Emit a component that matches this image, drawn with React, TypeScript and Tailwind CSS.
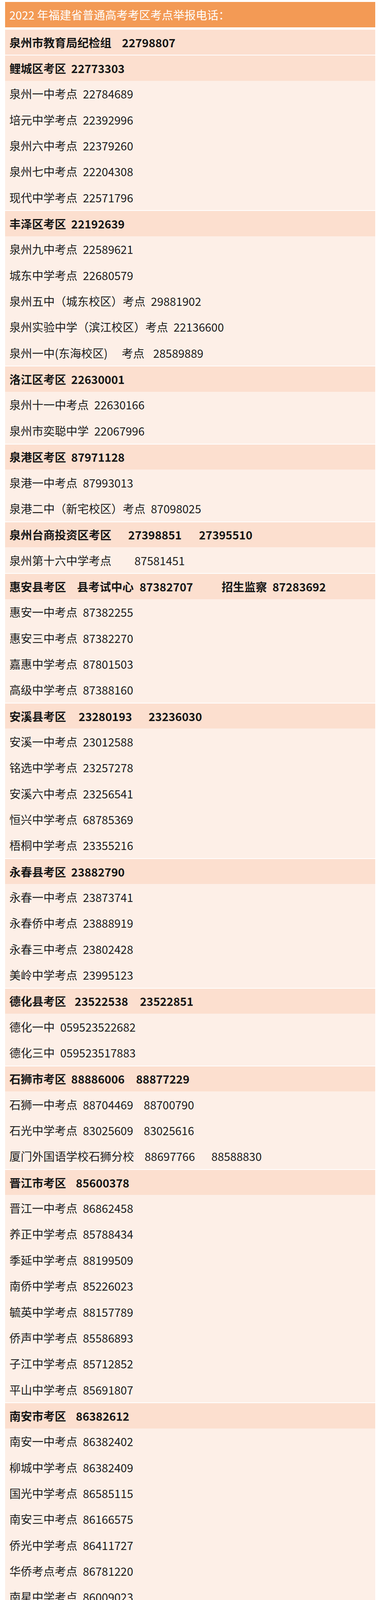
// 2022 福建省普通高考 泉州考区考点举报电话表

type Part = { t: string; gap?: string };
type Row = { head?: boolean; parts: Part[] };

// gap classes are written out in full so Tailwind picks them up
const G = 'ml-[14px]';

const rows: Row[] = [
  { head: true, parts: [{ t: '泉州市教育局纪检组' }, { t: '22798807', gap: 'ml-[27px]' }] },
  { head: true, parts: [{ t: '鲤城区考区' }, { t: '22773303', gap: 'ml-[13px]' }] },
  { parts: [{ t: '泉州一中考点' }, { t: '22784689', gap: G }] },
  { parts: [{ t: '培元中学考点' }, { t: '22392996', gap: G }] },
  { parts: [{ t: '泉州六中考点' }, { t: '22379260', gap: G }] },
  { parts: [{ t: '泉州七中考点' }, { t: '22204308', gap: G }] },
  { parts: [{ t: '现代中学考点' }, { t: '22571796', gap: G }] },
  { head: true, parts: [{ t: '丰泽区考区' }, { t: '22192639', gap: 'ml-[13px]' }] },
  { parts: [{ t: '泉州九中考点' }, { t: '22589621', gap: G }] },
  { parts: [{ t: '城东中学考点' }, { t: '22680579', gap: G }] },
  { parts: [{ t: '泉州五中（城东校区）考点' }, { t: '29881902', gap: G }] },
  { parts: [{ t: '泉州实验中学（滨江校区）考点' }, { t: '22136600', gap: G }] },
  { parts: [{ t: '泉州一中(东海校区)' }, { t: '考点', gap: 'ml-[36px]' }, { t: '28589889', gap: 'ml-[22px]' }] },
  { head: true, parts: [{ t: '洛江区考区' }, { t: '22630001', gap: 'ml-[13px]' }] },
  { parts: [{ t: '泉州十一中考点' }, { t: '22630166', gap: G }] },
  { parts: [{ t: '泉州市奕聪中学' }, { t: '22067996', gap: G }] },
  { head: true, parts: [{ t: '泉港区考区' }, { t: '87971128', gap: 'ml-[13px]' }] },
  { parts: [{ t: '泉港一中考点' }, { t: '87993013', gap: G }] },
  { parts: [{ t: '泉港二中（新宅校区）考点' }, { t: '87098025', gap: G }] },
  { head: true, parts: [{ t: '泉州台商投资区考区' }, { t: '27398851', gap: 'ml-[43px]' }, { t: '27395510', gap: 'ml-[44px]' }] },
  { parts: [{ t: '泉州第十六中学考点' }, { t: '87581451', gap: 'ml-[59px]' }] },
  {
    head: true,
    parts: [
      { t: '惠安县考区' },
      { t: '县考试中心', gap: 'ml-[28px]' },
      { t: '87382707', gap: 'ml-[15px]' },
      { t: '招生监察', gap: 'ml-[73px]' },
      { t: '87283692', gap: 'ml-[14px]' },
    ],
  },
  { parts: [{ t: '惠安一中考点' }, { t: '87382255', gap: G }] },
  { parts: [{ t: '惠安三中考点' }, { t: '87382270', gap: G }] },
  { parts: [{ t: '嘉惠中学考点' }, { t: '87801503', gap: G }] },
  { parts: [{ t: '高级中学考点' }, { t: '87388160', gap: G }] },
  { head: true, parts: [{ t: '安溪县考区' }, { t: '23280193', gap: 'ml-[32px]' }, { t: '23236030', gap: 'ml-[42px]' }] },
  { parts: [{ t: '安溪一中考点' }, { t: '23012588', gap: G }] },
  { parts: [{ t: '铭选中学考点' }, { t: '23257278', gap: G }] },
  { parts: [{ t: '安溪六中考点' }, { t: '23256541', gap: G }] },
  { parts: [{ t: '恒兴中学考点' }, { t: '68785369', gap: G }] },
  { parts: [{ t: '梧桐中学考点' }, { t: '23355216', gap: G }] },
  { head: true, parts: [{ t: '永春县考区' }, { t: '23882790', gap: 'ml-[13px]' }] },
  { parts: [{ t: '永春一中考点' }, { t: '23873741', gap: G }] },
  { parts: [{ t: '永春侨中考点' }, { t: '23888919', gap: G }] },
  { parts: [{ t: '永春三中考点' }, { t: '23802428', gap: G }] },
  { parts: [{ t: '美岭中学考点' }, { t: '23995123', gap: G }] },
  { head: true, parts: [{ t: '德化县考区' }, { t: '23522538', gap: 'ml-[22px]' }, { t: '23522851', gap: 'ml-[30px]' }] },
  { parts: [{ t: '德化一中' }, { t: '059523522682', gap: G }] },
  { parts: [{ t: '德化三中' }, { t: '059523517883', gap: G }] },
  { head: true, parts: [{ t: '石狮市考区' }, { t: '88886006', gap: 'ml-[13px]' }, { t: '88877229', gap: 'ml-[29px]' }] },
  { parts: [{ t: '石狮一中考点' }, { t: '88704469', gap: G }, { t: '88700790', gap: 'ml-[27px]' }] },
  { parts: [{ t: '石光中学考点' }, { t: '83025609', gap: G }, { t: '83025616', gap: 'ml-[27px]' }] },
  { parts: [{ t: '厦门外国语学校石狮分校' }, { t: '88697766', gap: 'ml-[27px]' }, { t: '88588830', gap: 'ml-[42px]' }] },
  { head: true, parts: [{ t: '晋江市考区' }, { t: '85600378', gap: 'ml-[25px]' }] },
  { parts: [{ t: '晋江一中考点' }, { t: '86862458', gap: G }] },
  { parts: [{ t: '养正中学考点' }, { t: '85788434', gap: G }] },
  { parts: [{ t: '季延中学考点' }, { t: '88199509', gap: G }] },
  { parts: [{ t: '南侨中学考点' }, { t: '85226023', gap: G }] },
  { parts: [{ t: '毓英中学考点' }, { t: '88157789', gap: G }] },
  { parts: [{ t: '侨声中学考点' }, { t: '85586893', gap: G }] },
  { parts: [{ t: '子江中学考点' }, { t: '85712852', gap: G }] },
  { parts: [{ t: '平山中学考点' }, { t: '85691807', gap: G }] },
  { head: true, parts: [{ t: '南安市考区' }, { t: '86382612', gap: 'ml-[25px]' }] },
  { parts: [{ t: '南安一中考点' }, { t: '86382402', gap: G }] },
  { parts: [{ t: '柳城中学考点' }, { t: '86382409', gap: G }] },
  { parts: [{ t: '国光中学考点' }, { t: '86585115', gap: G }] },
  { parts: [{ t: '南安三中考点' }, { t: '86166575', gap: G }] },
  { parts: [{ t: '侨光中学考点' }, { t: '86411727', gap: G }] },
  { parts: [{ t: '华侨考点考点' }, { t: '86781220', gap: G }] },
  { parts: [{ t: '南星中学考点' }, { t: '86009023', gap: G }] },
  { parts: [{ t: '鹏峰中学考点' }, { t: '86389121', gap: G }] },
];

export default function App() {
  return (
    <div
      className="h-[4212px] w-[985px] overflow-hidden bg-white pt-[5px]"
      style={{ fontFamily: '"Noto Sans CJK SC", "Noto Sans", sans-serif' }}
    >
      <div className="ml-[13px] w-[947px]">
        {/* Title bar */}
        <div className="flex h-[65px] items-center bg-[#f39a55] pl-[11px] text-[29px] leading-none text-white">
          2022 年福建省普通高考考区考点举报电话：
        </div>

        {/* Rows */}
        <div className="mt-[4px] flex flex-col">
          {rows.map((r, i) => (
            <div
              key={i}
              className={
                r.head
                  ? 'flex h-[66.35px] shrink-0 items-center border-t-2 border-white bg-[#fcdfcf] pl-[11px] text-[29px] leading-none font-bold text-[#161616]'
                  : 'flex h-[66.35px] shrink-0 items-center bg-[#fdefe7] pl-[11px] text-[29px] leading-none text-[#1c1c1c]'
              }
            >
              {r.parts.map((p, j) => (
                <span key={j} className={`whitespace-pre ${p.gap ?? ''}`}>
                  {p.t}
                </span>
              ))}
            </div>
          ))}
        </div>
      </div>
    </div>
  );
}
